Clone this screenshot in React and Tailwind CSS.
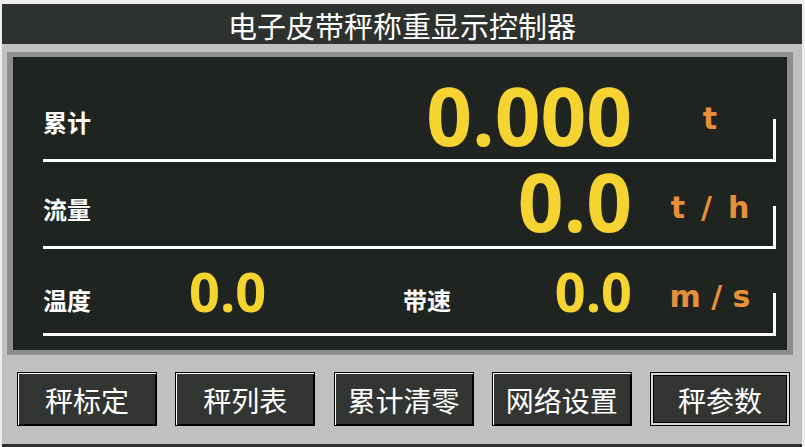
import React from "react";

const cjk = "font-['Noto_Sans_CJK_SC',sans-serif]";

function Bracket() {
  return <div className="w-[3px] h-[40px] bg-white shrink-0" />;
}

function Unit({ children, mb }) {
  return (
    <div
      className={`w-[120px] ml-[18px] mr-[3px] shrink-0 flex justify-center font-['DejaVu_Sans',sans-serif] font-bold text-[30px] leading-none text-[#e88f3a] whitespace-pre ${mb}`}
    >
      {children}
    </div>
  );
}

function Btn({ children, focused }) {
  return (
    <div
      className={`w-[140px] h-[54px] bg-[#323532] border border-black flex items-center justify-center text-white text-[28px] leading-none ${cjk} ${
        focused
          ? "shadow-[inset_0_0_0_2px_#d8d8d8,inset_0_0_0_3px_#000]"
          : "shadow-[inset_1px_1px_0_#ffffff,inset_-1px_-1px_0_#000000]"
      }`}
    >
      <span className="pt-[1px]">{children}</span>
    </div>
  );
}

export default function App() {
  return (
    <div className="w-[805px] h-[447px] bg-[#eeeeee] pt-[4px] pl-[2px] pr-[3px] overflow-hidden">
      <div className="h-full flex flex-col bg-[#c0c0c0]">
        <div
          className={`h-[40px] shrink-0 bg-[#2e322f] flex items-center justify-center text-white text-[29px] leading-none pt-[3px] ${cjk}`}
        >
          电子皮带秤称重显示控制器
        </div>

        <div className="mt-[8px] ml-[5px] mr-[9px] h-[303px] shrink-0 border-x-[6px] border-y-[5px] border-[#8e8e8e] bg-[#202421] pl-[30px] pr-[11px] flex flex-col">
          {/* Row 1 */}
          <div className="h-[105px] shrink-0 border-b-[3px] border-white flex items-end">
            <div className={`text-white font-bold text-[24px] leading-none mb-[25px] ${cjk}`}>累计</div>
            <div className="flex-1 text-right font-['Open_Sans',sans-serif] font-bold text-[80px] leading-none text-[#f5d331] mb-[4px]">
              0.000
            </div>
            <Unit mb="mb-[25px]">t</Unit>
            <Bracket />
          </div>

          {/* Row 2 */}
          <div className="h-[87px] shrink-0 border-b-[3px] border-white flex items-end">
            <div className={`text-white font-bold text-[24px] leading-none mb-[25px] ${cjk}`}>流量</div>
            <div className="flex-1 text-right font-['Open_Sans',sans-serif] font-bold text-[80px] leading-none text-[#f5d331] mb-[5px]">
              0.0
            </div>
            <Unit mb="mb-[23px]">
              <span className="flex gap-[16px]">
                <span>t</span>
                <span>/</span>
                <span>h</span>
              </span>
            </Unit>
            <Bracket />
          </div>

          {/* Row 3 */}
          <div className="h-[87px] shrink-0 border-b-[3px] border-white flex items-end">
            <div className={`w-[146px] shrink-0 text-white font-bold text-[24px] leading-none mb-[21px] ${cjk}`}>温度</div>
            <div className="w-[214px] shrink-0 font-['Open_Sans',sans-serif] font-bold text-[54px] leading-none text-[#f5d331] mb-[15px]">
              0.0
            </div>
            <div className={`text-white font-bold text-[24px] leading-none mb-[21px] ${cjk}`}>带速</div>
            <div className="flex-1 text-right font-['Open_Sans',sans-serif] font-bold text-[54px] leading-none text-[#f5d331] mb-[15px]">
              0.0
            </div>
            <Unit mb="mb-[21px]">m / s</Unit>
            <Bracket />
          </div>
        </div>

        <div className="mt-[17px] h-[54px] shrink-0 flex justify-between pl-[15px] pr-[12px]">
          <Btn>秤标定</Btn>
          <Btn>秤列表</Btn>
          <Btn>累计清零</Btn>
          <Btn>网络设置</Btn>
          <Btn focused>秤参数</Btn>
        </div>

        <div className="flex-1" />
        <div className="h-[3px] shrink-0 bg-[#2e322f]" />
      </div>
    </div>
  );
}
